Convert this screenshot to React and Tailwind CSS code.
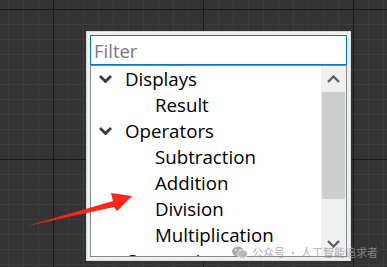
import React from 'react';

const groups = [
  { name: 'Displays', children: ['Result'] },
  { name: 'Operators', children: ['Subtraction', 'Addition', 'Division', 'Multiplication'] },
  { name: 'Conversions', children: [] },
];

const Chevron = ({ up, className, w = 2.4 }) => (
  <svg width="13" height="8" viewBox="0 0 13 8" className={className}>
    <polyline
      points={up ? '1,7 6.5,1.5 12,7' : '1,1 6.5,6.5 12,1'}
      fill="none"
      stroke="currentColor"
      strokeWidth={w}
    />
  </svg>
);

const GridCanvas = () => (
  <svg className="absolute inset-0" width="387" height="267">
    <defs>
      <pattern id="minor" x="8" y="9" width="15" height="15" patternUnits="userSpaceOnUse">
        <rect x="0" y="0" width="1" height="15" fill="#3c3c3c" />
        <rect x="0" y="0" width="15" height="1" fill="#3c3c3c" />
      </pattern>
      <pattern id="major" x="53" y="9" width="150" height="150" patternUnits="userSpaceOnUse">
        <rect x="0" y="0" width="1" height="150" fill="#1c1c1c" />
        <rect x="0" y="0" width="150" height="1" fill="#1c1c1c" />
      </pattern>
    </defs>
    <rect width="387" height="267" fill="#333333" />
    <rect width="387" height="267" fill="url(#minor)" />
    <rect width="387" height="267" fill="url(#major)" />
  </svg>
);

const App = () => {
  return (
    <div className="relative w-[387px] h-[267px] overflow-hidden bg-[#333333] font-['Open_Sans',sans-serif]">
      <GridCanvas />

      {/* node picker popup */}
      <div className="absolute left-[86px] top-[31px] w-[265px] h-[230px] bg-[#f0f0f0] border border-[#d9d9d9] p-[3px] flex flex-col">
        <input
          type="text"
          placeholder="Filter"
          className="h-[30px] w-full shrink-0 border border-[#0078d7] bg-white pl-[3px] text-[18.5px] leading-[28px] text-black placeholder:text-[#7a7a7a] outline-none"
        />
        <div className="flex-1 min-h-0 flex border border-[#828790] bg-white">
          <div className="flex-1 overflow-hidden">
            {groups.map((g) => (
              <div key={g.name}>
                <div className="flex items-center h-[26px] pl-[8px] text-[18.7px] leading-[26px] text-black">
                  <Chevron className="text-[#3a3a3a] mr-[13px]" w={2.8} />
                  <span>{g.name}</span>
                </div>
                {g.children.map((c) => (
                  <div key={c} className="h-[26px] pl-[64px] text-[18.7px] leading-[26px] text-black">
                    {c}
                  </div>
                ))}
              </div>
            ))}
          </div>

          <div className="w-[25px] shrink-0 flex flex-col bg-[#f0f0f0]">
            <div className="h-[26px] flex items-center justify-center text-[#606060]">
              <Chevron up />
            </div>
            <div className="flex-1">
              <div className="h-[107px] mx-[1px] bg-[#cdcdcd]" />
            </div>
            <div className="h-[26px] flex items-start justify-center pt-[10px] text-[#606060]">
              <Chevron />
            </div>
          </div>
        </div>
      </div>

      {/* annotation arrow */}
      <svg className="absolute left-0 top-0" width="387" height="267">
        <polygon
          points="27,226 113,201 111,193 132,196 117,211 114,207"
          fill="#ff2418"
        />
      </svg>

      {/* watermark */}
      <div className="absolute left-[232px] top-[243px] flex items-center gap-[4px] whitespace-nowrap text-[#9a9a9a]/80 font-['Noto_Sans_CJK_SC',sans-serif] text-[11px] leading-[18px]">
        <svg width="16" height="13" viewBox="0 0 16 13" className="shrink-0">
          <ellipse cx="6" cy="5.5" rx="6" ry="5" fill="#a8a8a8" />
          <ellipse cx="10.5" cy="8" rx="5" ry="4.2" fill="#b8b8b8" stroke="#f4f4f4" strokeWidth="0.8" />
          <circle cx="4" cy="4" r="0.9" fill="#eee" />
          <circle cx="8" cy="4" r="0.9" fill="#eee" />
        </svg>
        <span>公众号 · 人工智能追求者</span>
      </div>
    </div>
  );
};

export default App;
